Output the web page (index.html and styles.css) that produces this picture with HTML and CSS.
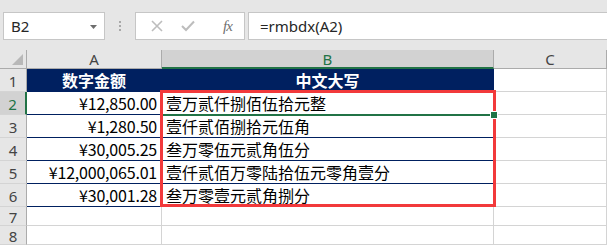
FILE: index.html
```html
<!DOCTYPE html>
<html lang="zh-CN">
<head>
<meta charset="utf-8">
<title>rmbdx</title>
<link rel="stylesheet" href="styles.css">
</head>
<body>
<div class="app">
  <div class="toolbar">
    <div class="namebox">
      <span class="name">B2</span>
      <svg class="caret" width="7" height="4" viewBox="0 0 7 4"><path d="M0 0H7L3.5 4Z" fill="#6d6d6d"/></svg>
    </div>
    <div class="grip"><i></i><i></i><i></i></div>
    <div class="fbtns">
      <svg class="ico" width="12" height="12" viewBox="0 0 12 12"><path d="M1 1L11 11M11 1L1 11" stroke="#bdbdbd" stroke-width="1.6" fill="none"/></svg>
      <svg class="ico" width="14" height="12" viewBox="0 0 14 12"><path d="M1 6L5 10L13 1.5" stroke="#bdbdbd" stroke-width="2" fill="none"/></svg>
      <span class="fx">fx</span>
    </div>
    <div class="formula">=rmbdx(A2)</div>
  </div>
  <div class="sheet">
    <div class="grid">
      <div class="corner"><span class="tri"></span></div>
      <div class="colhdr">A</div>
      <div class="colhdr sel">B</div>
      <div class="colhdr last">C</div>

      <div class="rowhdr">1</div>
      <div class="cell head">数字金额</div>
      <div class="cell head">中文大写</div>
      <div class="cell c"></div>

      <div class="rowhdr sel">2</div>
      <div class="cell num">¥12,850.00</div>
      <div class="cell txt">壹万贰仟捌佰伍拾元整</div>
      <div class="cell c"></div>

      <div class="rowhdr">3</div>
      <div class="cell num">¥1,280.50</div>
      <div class="cell txt">壹仟贰佰捌拾元伍角</div>
      <div class="cell c"></div>

      <div class="rowhdr">4</div>
      <div class="cell num">¥30,005.25</div>
      <div class="cell txt">叁万零伍元贰角伍分</div>
      <div class="cell c"></div>

      <div class="rowhdr">5</div>
      <div class="cell num">¥12,000,065.01</div>
      <div class="cell txt">壹仟贰佰万零陆拾伍元零角壹分</div>
      <div class="cell c"></div>

      <div class="rowhdr">6</div>
      <div class="cell num">¥30,001.28</div>
      <div class="cell txt">叁万零壹元贰角捌分</div>
      <div class="cell c"></div>

      <div class="rowhdr">7</div>
      <div class="cell e"></div>
      <div class="cell e"></div>
      <div class="cell c"></div>

      <div class="rowhdr">8</div>
      <div class="cell e"></div>
      <div class="cell e"></div>
      <div class="cell c"></div>
    </div>
    <div class="selection"></div>
    <div class="redbox"></div>
    <div class="handle"></div>
  </div>
</div>
</body>
</html>
```
FILE: styles.css
```css
* { box-sizing: border-box; }
html, body { margin: 0; padding: 0; }
body {
  width: 607px;
  height: 246px;
  overflow: hidden;
  background: #ffffff;
  font-family: "Noto Sans", "Noto Sans CJK SC", sans-serif;
}
.app { width: 607px; }

.toolbar {
  display: flex;
  align-items: flex-start;
  height: 50px;
  padding-top: 12px;
  padding-left: 3px;
  background: #e6e6e6;
}
.namebox {
  width: 102px;
  height: 28px;
  background: #fff;
  border: 1px solid #c6c6c6;
  display: flex;
  align-items: center;
  justify-content: space-between;
  padding: 0 7px 0 7px;
}
.name { font-size: 15px; color: #262626; }
.caret { margin-top: 1px; }
.grip {
  width: 30px;
  height: 28px;
  display: flex;
  flex-direction: column;
  align-items: center;
  justify-content: center;
  gap: 2px;
}
.grip i { display: block; width: 2px; height: 2px; background: #a8a8a8; }
.fbtns {
  width: 110px;
  height: 28px;
  background: #fff;
  border: 1px solid #c6c6c6;
  display: flex;
  align-items: center;
  padding-left: 15px;
  gap: 18px;
}
.fbtns .ico:nth-child(2) { margin-left: 0; }
.fx {
  font-family: "Liberation Serif", serif;
  font-style: italic;
  font-size: 15px;
  color: #707070;
  margin-left: 10px;
  letter-spacing: -1px;
}
.formula {
  flex: 1;
  margin-left: 3px;
  height: 28px;
  background: #fff;
  border: 1px solid #c6c6c6;
  border-right: none;
  font-size: 15px;
  color: #262626;
  display: flex;
  align-items: center;
  padding-left: 11px;
}

.sheet { position: relative; }
.grid {
  display: grid;
  grid-template-columns: 27px 135px 332px 113px;
  grid-template-rows: 19px repeat(6, 23px) 19px 19px;
}
.grid > div {
  border-right: 1px solid #d4d4d4;
  border-bottom: 1px solid #d4d4d4;
}
.corner {
  background: #e6e6e6;
  position: relative;
  border-right-color: #ababab !important;
  border-bottom-color: #ababab !important;
}
.tri {
  position: absolute;
  right: 3px;
  bottom: 3px;
  width: 0;
  height: 0;
  border-left: 11px solid transparent;
  border-bottom: 11px solid #b8b8b8;
}
.colhdr {
  background: #e6e6e6;
  border-bottom-color: #ababab !important;
  border-right-color: #ababab !important;
  font-size: 15px;
  color: #444;
  display: flex;
  align-items: center;
  justify-content: center;
  line-height: 1;
  padding-top: 1px;
}
.colhdr.sel {
  background: #d2d2d2;
  color: #217346;
  border-bottom: 2px solid #217346 !important;
}
.colhdr.last { border-right-color: #ababab !important; }
.rowhdr {
  background: #e6e6e6;
  border-right-color: #ababab !important;
  font-size: 15px;
  color: #444;
  display: flex;
  align-items: center;
  justify-content: center;
  padding-top: 3px;
  line-height: 1;
}
.rowhdr.sel {
  background: #d2d2d2;
  color: #217346;
  border-right: 2px solid #217346 !important;
}
.cell {
  font-family: "Noto Sans CJK SC", sans-serif;
  font-size: 16px;
  line-height: 22px;
  color: #000;
  white-space: nowrap;
  overflow: visible;
}
.cell.head {
  background: #002060;
  color: #fff;
  font-weight: bold;
  text-align: center;
  border-bottom-color: #002060 !important;
  border-right-color: #002060 !important;
}
.cell.num {
  text-align: right;
  padding-right: 4px;
  border-bottom-color: #002060 !important;
  letter-spacing: -0.2px;
}
.cell.txt {
  padding-left: 4px;
  border-bottom-color: #002060 !important;
}
.cell.c { border-right-color: #d4d4d4; }

.selection {
  position: absolute;
  left: 161px;
  top: 41px;
  width: 334px;
  height: 25px;
  border: 2px solid #217346;
}
.redbox {
  position: absolute;
  left: 160px;
  top: 40px;
  width: 336px;
  height: 117px;
  border: 3px solid #f2393b;
}
.handle {
  position: absolute;
  left: 491px;
  top: 62px;
  width: 6px;
  height: 6px;
  background: #217346;
  outline: 1px solid #fff;
}
```
